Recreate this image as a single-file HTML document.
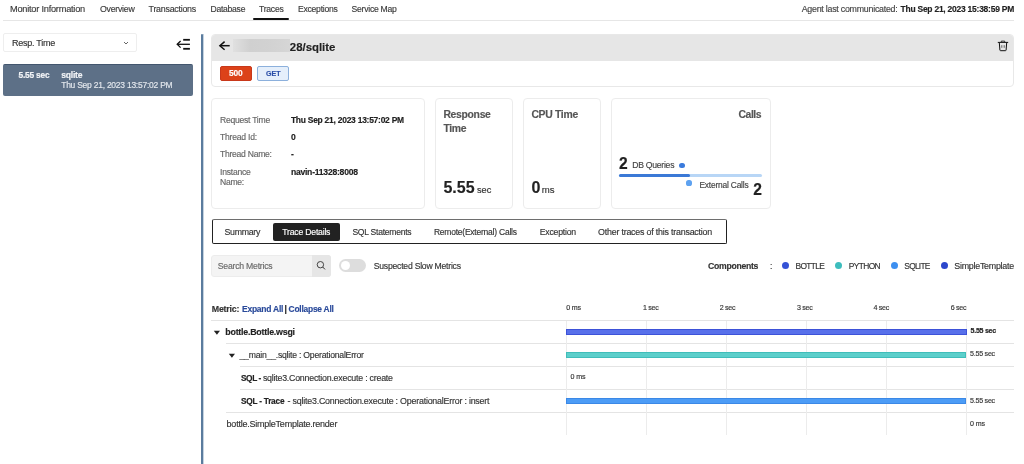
<!DOCTYPE html>
<html><head><meta charset="utf-8"><title>Traces</title>
<style>
html,body{margin:0;padding:0;background:#fff;}
body{width:1024px;height:464px;position:relative;overflow:hidden;font-family:"Liberation Sans",sans-serif;}
.t{position:absolute;white-space:pre;line-height:1;-webkit-text-stroke:0.15px currentColor;}
#wrap{position:absolute;left:0;top:0;width:1024px;height:464px;filter:blur(0.3px);}
.r{position:absolute;}
svg.r{overflow:visible;}
</style></head><body><div id="wrap">
<div class="t" style="left:10.00px;top:5px;font-size:9.23px;font-weight:400;color:#3a3a3a;letter-spacing:-0.234px;">Monitor Information</div>
<div class="t" style="left:100.00px;top:5px;font-size:8.78px;font-weight:400;color:#3a3a3a;letter-spacing:-0.260px;">Overview</div>
<div class="t" style="left:148.60px;top:5px;font-size:8.83px;font-weight:400;color:#3a3a3a;letter-spacing:-0.237px;">Transactions</div>
<div class="t" style="left:210.50px;top:5px;font-size:8.59px;font-weight:400;color:#3a3a3a;letter-spacing:-0.260px;">Database</div>
<div class="t" style="left:259.00px;top:5px;font-size:8.61px;font-weight:400;color:#3a3a3a;letter-spacing:-0.245px;">Traces</div>
<div class="t" style="left:298.00px;top:5px;font-size:8.59px;font-weight:400;color:#3a3a3a;letter-spacing:-0.237px;">Exceptions</div>
<div class="t" style="left:351.60px;top:5px;font-size:8.6px;font-weight:400;color:#3a3a3a;letter-spacing:-0.253px;">Service Map</div>
<div class="t" style="left:801.70px;top:5px;font-size:8.84px;font-weight:400;color:#444;letter-spacing:-0.240px;">Agent last communicated:</div>
<div class="t" style="right:10.04px;top:5px;font-size:8.48px;font-weight:700;color:#222;letter-spacing:-0.237px;">Thu Sep 21, 2023 15:38:59 PM</div>
<div class="r" style="left:3px;top:20px;width:1011px;height:1px;background:#e6e6e6"></div>
<div class="r" style="left:253px;top:18px;width:36px;height:2px;background:#111;border-radius:1px"></div>
<div class="r" style="left:3px;top:33px;width:134px;height:19px;border:1px solid #eeeeee;border-radius:2px;box-sizing:border-box;background:#fff"></div>
<div class="t" style="left:12.00px;top:39px;font-size:9.0px;font-weight:400;color:#333;letter-spacing:-0.259px;">Resp. Time</div>
<svg class="r" style="left:123px;top:41px" width="6" height="4" viewBox="0 0 6 4"><path d="M1 1 L3 3 L5 1" fill="none" stroke="#555" stroke-width="0.9"/></svg>
<svg class="r" style="left:175px;top:37px" width="17" height="14" viewBox="0 0 17 14"><path d="M8.2 2.8 H14.9" stroke="#111" stroke-width="1.8"/><path d="M2.2 7.3 H14.9" stroke="#111" stroke-width="1.3"/><path d="M5.6 4 L2.2 7.3 L5.6 10.6" fill="none" stroke="#111" stroke-width="1.3"/><path d="M8.2 11.8 H14.9" stroke="#111" stroke-width="1.8"/></svg>
<div class="r" style="left:3px;top:64px;width:190px;height:32px;background:#5d7087;border-top:1px solid #43566e;box-sizing:border-box;border-radius:2px"></div>
<div class="t" style="left:18.60px;top:71px;font-size:8.37px;font-weight:700;color:#f2f4f7;letter-spacing:-0.229px;">5.55 sec</div>
<div class="t" style="left:61.20px;top:71px;font-size:8.59px;font-weight:700;color:#f2f4f7;letter-spacing:-0.211px;">sqlite</div>
<div class="t" style="left:61.20px;top:81px;font-size:8.48px;font-weight:400;color:#e4e8ee;letter-spacing:-0.233px;">Thu Sep 21, 2023 13:57:02 PM</div>
<div class="r" style="left:201px;top:34px;width:2px;height:430px;background:#5b7c9e;border-radius:1px 1px 0 0"></div>
<div class="r" style="left:203px;top:34px;width:0.5px;height:430px;background:#c5d3e0"></div>
<div class="r" style="left:211px;top:34px;width:803px;height:53px;border:1px solid #e8e8e8;border-radius:4px;box-sizing:border-box;background:#fff;overflow:hidden"></div>
<div class="r" style="left:212px;top:35px;width:801px;height:26px;background:#e6e6e6;border-radius:3px 3px 0 0"></div>
<svg class="r" style="left:217px;top:39px" width="16" height="13" viewBox="0 0 16 13"><path d="M2.9 6.7 H12.7" stroke="#111" stroke-width="1.5"/><path d="M7.6 2.6 L2.9 6.7 L7.6 10.8" fill="none" stroke="#111" stroke-width="1.5"/></svg>
<div class="r" style="left:233px;top:39px;width:57px;height:13px;background:linear-gradient(90deg,#e0e0e0,#d0d0d0 30%,#d2d2d2 70%,#d6d6d6);filter:blur(0.6px)"></div>
<div class="t" style="left:289.80px;top:42px;font-size:11.4px;font-weight:700;color:#222;">28/sqlite</div>
<svg class="r" style="left:996px;top:39px" width="14" height="14" viewBox="0 0 14 14"><path d="M1.8 3.4 H12.2" stroke="#111" stroke-width="1.0"/><path d="M5.3 3.2 V2.1 H8.7 V3.2" fill="none" stroke="#222" stroke-width="0.9"/><path d="M3.3 3.6 L3.9 11.1 Q4 11.7 4.6 11.7 H9.4 Q10 11.7 10.1 11.1 L10.7 3.6" fill="none" stroke="#111" stroke-width="1.0"/><path d="M5.8 6.2 V8.8" stroke="#444" stroke-width="0.8"/><path d="M8.2 6.2 V8.8" stroke="#444" stroke-width="0.8"/></svg>
<div class="r" style="left:220px;top:66px;width:32px;height:15px;background:#dc4219;border-radius:2px;border:1px solid #c8381a;box-sizing:border-box"></div>
<div class="t" style="left:229.00px;top:69px;font-size:8.4px;font-weight:700;color:#fff;letter-spacing:-0.167px;">500</div>
<div class="r" style="left:257px;top:66px;width:32px;height:15px;background:#e5effb;border-radius:2px;border:1px solid #8cb0dc;box-sizing:border-box"></div>
<div class="t" style="left:266.00px;top:70px;font-size:8.0px;font-weight:700;color:#2b4fa8;transform:scaleX(0.885);transform-origin:0 0">GET</div>
<div class="r" style="left:211.3px;top:98.3px;width:213.39999999999998px;height:110.39999999999999px;border:1px solid #ececec;border-radius:4px;box-sizing:border-box;background:#fff"></div>
<div class="t" style="left:220.00px;top:116px;font-size:8.59px;font-weight:400;color:#666;letter-spacing:-0.249px;">Request Time</div>
<div class="t" style="left:220.00px;top:133px;font-size:8.59px;font-weight:400;color:#666;letter-spacing:-0.220px;">Thread Id:</div>
<div class="t" style="left:220.00px;top:150px;font-size:8.59px;font-weight:400;color:#666;letter-spacing:-0.258px;">Thread Name:</div>
<div class="t" style="left:220.00px;top:168px;font-size:8.59px;font-weight:400;color:#666;letter-spacing:-0.229px;">Instance</div>
<div class="t" style="left:220.00px;top:178px;font-size:8.59px;font-weight:400;color:#666;letter-spacing:-0.284px;">Name:</div>
<div class="t" style="left:290.90px;top:116px;font-size:8.46px;font-weight:700;color:#222;letter-spacing:-0.245px;">Thu Sep 21, 2023 13:57:02 PM</div>
<div class="t" style="left:290.90px;top:133px;font-size:8.59px;font-weight:700;color:#222;letter-spacing:-0.266px;">0</div>
<div class="t" style="left:290.90px;top:150px;font-size:8.59px;font-weight:700;color:#222;letter-spacing:-0.156px;">-</div>
<div class="t" style="left:290.90px;top:168px;font-size:8.63px;font-weight:700;color:#222;letter-spacing:-0.257px;">navin-11328:8008</div>
<div class="r" style="left:435px;top:98px;width:77.70000000000005px;height:110.69999999999999px;border:1px solid #ececec;border-radius:4px;box-sizing:border-box;background:#fff"></div>
<div class="t" style="left:443.40px;top:110px;font-size:10.4px;font-weight:700;color:#555;letter-spacing:-0.309px;">Response</div>
<div class="t" style="left:443.40px;top:124px;font-size:10.4px;font-weight:700;color:#555;letter-spacing:-0.301px;">Time</div>
<div class="t" style="left:443.40px;top:180px;font-size:16.0px;font-weight:700;color:#222;">5.55</div>
<div class="t" style="left:477.00px;top:186px;font-size:9.2px;font-weight:400;color:#333;">sec</div>
<div class="r" style="left:522.7px;top:98px;width:78.0px;height:110.69999999999999px;border:1px solid #ececec;border-radius:4px;box-sizing:border-box;background:#fff"></div>
<div class="t" style="left:531.40px;top:110px;font-size:10.4px;font-weight:700;color:#555;letter-spacing:-0.303px;">CPU Time</div>
<div class="t" style="left:531.40px;top:180px;font-size:16.0px;font-weight:700;color:#222;">0</div>
<div class="t" style="left:541.70px;top:185px;font-size:9.6px;font-weight:400;color:#333;">ms</div>
<div class="r" style="left:610.5px;top:98px;width:160.0px;height:110.69999999999999px;border:1px solid #ececec;border-radius:4px;box-sizing:border-box;background:#fff"></div>
<div class="t" style="right:262.97px;top:110px;font-size:10.4px;font-weight:700;color:#555;letter-spacing:-0.472px;">Calls</div>
<div class="t" style="left:619.00px;top:156px;font-size:15.6px;font-weight:700;color:#222;">2</div>
<div class="t" style="left:632.20px;top:161px;font-size:8.64px;font-weight:400;color:#444;letter-spacing:-0.258px;">DB Queries</div>
<div class="r" style="left:679.4px;top:163.1px;width:5.2px;height:5.2px;border-radius:50%;background:#3b7bdc"></div>
<div class="r" style="left:619px;top:174px;width:143px;height:3px;background:#b8d6f6;border-radius:1.5px"></div>
<div class="r" style="left:619px;top:174px;width:71px;height:3px;background:#3b79d6;border-radius:1.5px"></div>
<div class="r" style="left:686.4px;top:180.4px;width:5.2px;height:5.2px;border-radius:50%;background:#5ea2f0"></div>
<div class="t" style="left:699.40px;top:181px;font-size:8.44px;font-weight:400;color:#444;letter-spacing:-0.208px;">External Calls</div>
<div class="t" style="right:262.20px;top:182px;font-size:15.6px;font-weight:700;color:#222;">2</div>
<div class="r" style="left:211.5px;top:219px;width:515.0px;height:25px;border:1.3px solid #222;border-top-color:#6e6e6e;border-radius:2px;box-sizing:border-box;background:#fff"></div>
<div class="r" style="left:273px;top:222.5px;width:67px;height:18.5px;background:#222;border-radius:2px"></div>
<div class="t" style="left:224.50px;top:228px;font-size:8.8px;font-weight:400;color:#333;letter-spacing:-0.306px;">Summary</div>
<div class="t" style="left:282.30px;top:228px;font-size:8.69px;font-weight:400;color:#fff;letter-spacing:-0.218px;">Trace Details</div>
<div class="t" style="left:352.40px;top:228px;font-size:8.56px;font-weight:400;color:#333;letter-spacing:-0.244px;">SQL Statements</div>
<div class="t" style="left:433.90px;top:228px;font-size:8.51px;font-weight:400;color:#333;letter-spacing:-0.228px;">Remote(External) Calls</div>
<div class="t" style="left:539.80px;top:228px;font-size:8.71px;font-weight:400;color:#333;letter-spacing:-0.238px;">Exception</div>
<div class="t" style="left:598.00px;top:228px;font-size:8.9px;font-weight:400;color:#333;letter-spacing:-0.213px;">Other traces of this transaction</div>
<div class="r" style="left:211px;top:255px;width:120px;height:21.5px;background:#f4f4f4;border:1px solid #ececec;border-radius:3px;box-sizing:border-box"></div>
<div class="r" style="left:312px;top:255px;width:19px;height:21.5px;background:#e6e6e6;border-radius:0 3px 3px 0"></div>
<div class="t" style="left:217.80px;top:262px;font-size:8.69px;font-weight:400;color:#6a6a6a;letter-spacing:-0.230px;">Search Metrics</div>
<svg class="r" style="left:314px;top:258px" width="14" height="14" viewBox="0 0 14 14"><circle cx="6.4" cy="6.7" r="3.2" fill="none" stroke="#333" stroke-width="0.9"/><path d="M8.7 9 L11 11.4" stroke="#333" stroke-width="1"/></svg>
<div class="r" style="left:339px;top:259.2px;width:27px;height:12.800000000000011px;background:#dddddd;border-radius:7px"></div>
<div class="r" style="left:341.2px;top:260.8px;width:9px;height:9px;border-radius:50%;background:#fff"></div>
<div class="t" style="left:373.75px;top:262px;font-size:8.65px;font-weight:400;color:#333;letter-spacing:-0.227px;">Suspected Slow Metrics</div>
<div class="t" style="left:708.10px;top:262px;font-size:8.67px;font-weight:700;color:#333;letter-spacing:-0.297px;">Components</div>
<div class="t" style="left:770.00px;top:262px;font-size:8.59px;font-weight:400;color:#333;letter-spacing:-0.141px;">:</div>
<div class="r" style="left:782.00px;top:262.00px;width:7.00px;height:7.00px;border-radius:50%;background:#3552d6"></div>
<div class="t" style="left:795.60px;top:262px;font-size:8.4px;font-weight:400;color:#333;letter-spacing:-0.667px;">BOTTLE</div>
<div class="r" style="left:835.00px;top:262.00px;width:7.00px;height:7.00px;border-radius:50%;background:#3dbdbd"></div>
<div class="t" style="left:848.80px;top:262px;font-size:8.4px;font-weight:400;color:#333;letter-spacing:-0.620px;">PYTHON</div>
<div class="r" style="left:891.00px;top:262.00px;width:7.00px;height:7.00px;border-radius:50%;background:#3d8ff0"></div>
<div class="t" style="left:904.30px;top:262px;font-size:8.4px;font-weight:400;color:#333;letter-spacing:-0.750px;">SQLITE</div>
<div class="r" style="left:940.50px;top:262.00px;width:7.00px;height:7.00px;border-radius:50%;background:#2c47cc"></div>
<div class="t" style="left:954.30px;top:262px;font-size:8.89px;font-weight:400;color:#333;letter-spacing:-0.253px;">SimpleTemplate</div>
<div class="t" style="left:211.80px;top:305px;font-size:8.83px;font-weight:700;color:#333;letter-spacing:-0.234px;">Metric:</div>
<div class="t" style="left:242.00px;top:305px;font-size:8.51px;font-weight:700;color:#2a4a9a;letter-spacing:-0.248px;">Expand All</div>
<div class="t" style="left:284.40px;top:305px;font-size:8.48px;font-weight:700;color:#222;letter-spacing:-0.125px;">|</div>
<div class="t" style="left:288.60px;top:305px;font-size:8.41px;font-weight:700;color:#2a4a9a;letter-spacing:-0.229px;">Collapse All</div>
<div class="t" style="left:566.20px;top:305px;font-size:7.1px;font-weight:400;color:#333;letter-spacing:-0.145px;">0 ms</div>
<div class="t" style="left:643.00px;top:305px;font-size:7.1px;font-weight:400;color:#333;letter-spacing:-0.284px;">1 sec</div>
<div class="t" style="left:719.70px;top:305px;font-size:7.1px;font-weight:400;color:#333;letter-spacing:-0.284px;">2 sec</div>
<div class="t" style="left:796.90px;top:305px;font-size:7.1px;font-weight:400;color:#333;letter-spacing:-0.284px;">3 sec</div>
<div class="t" style="left:873.50px;top:305px;font-size:7.1px;font-weight:400;color:#333;letter-spacing:-0.284px;">4 sec</div>
<div class="t" style="left:950.70px;top:305px;font-size:7.1px;font-weight:400;color:#333;letter-spacing:-0.284px;">6 sec</div>
<div class="r" style="left:211px;top:320px;width:803px;height:1px;background:#e4e4e4"></div>
<div class="r" style="left:226px;top:343px;width:788px;height:1px;background:#e4e4e4"></div>
<div class="r" style="left:240px;top:366px;width:774px;height:1px;background:#e4e4e4"></div>
<div class="r" style="left:240px;top:389px;width:774px;height:1px;background:#e4e4e4"></div>
<div class="r" style="left:226px;top:412px;width:788px;height:1px;background:#e4e4e4"></div>
<div class="r" style="left:566px;top:321px;width:1px;height:114px;background:#ececec"></div>
<div class="r" style="left:646px;top:321px;width:1px;height:114px;background:#ececec"></div>
<div class="r" style="left:726px;top:321px;width:1px;height:114px;background:#ececec"></div>
<div class="r" style="left:806px;top:321px;width:1px;height:114px;background:#ececec"></div>
<div class="r" style="left:886px;top:321px;width:1px;height:114px;background:#ececec"></div>
<div class="r" style="left:966px;top:321px;width:1px;height:114px;background:#ececec"></div>
<svg class="r" style="left:213px;top:329.6px" width="8" height="6" viewBox="0 0 8 6"><path d="M0.8 0.8 H7 L3.9 4.8 Z" fill="#222"/></svg>
<svg class="r" style="left:228px;top:352.6px" width="8" height="6" viewBox="0 0 8 6"><path d="M0.8 0.8 H7 L3.9 4.8 Z" fill="#222"/></svg>
<div class="t" style="left:225.30px;top:328px;font-size:8.86px;font-weight:700;color:#222;letter-spacing:-0.232px;">bottle.Bottle.wsgi</div>
<div class="t" style="left:239.50px;top:351px;font-size:8.66px;font-weight:400;color:#333;letter-spacing:-0.224px;">__main__.sqlite : OperationalError</div>
<div class="t" style="left:240.90px;top:374px;font-size:8.3px;font-weight:700;color:#222;letter-spacing:-0.372px;">SQL -</div>
<div class="t" style="left:262.90px;top:374px;font-size:8.82px;font-weight:400;color:#333;letter-spacing:-0.223px;">sqlite3.Connection.execute : create</div>
<div class="t" style="left:240.90px;top:397px;font-size:8.3px;font-weight:700;color:#222;letter-spacing:-0.236px;">SQL - Trace</div>
<div class="t" style="left:287.60px;top:397px;font-size:8.87px;font-weight:400;color:#333;letter-spacing:-0.215px;">- sqlite3.Connection.execute : OperationalError : insert</div>
<div class="t" style="left:226.60px;top:420px;font-size:9.01px;font-weight:400;color:#333;letter-spacing:-0.232px;">bottle.SimpleTemplate.render</div>
<div class="r" style="left:566px;top:328.5px;width:401px;height:6.5px;background:#5870ea;border:1px solid #3d52d8;box-sizing:border-box"></div>
<div class="r" style="left:566px;top:351.5px;width:400px;height:6.5px;background:#5ccfcb;border:1px solid #40bdb9;box-sizing:border-box"></div>
<div class="r" style="left:566px;top:397.5px;width:400px;height:6.5px;background:#4c9cf6;border:1px solid #3b88e6;box-sizing:border-box"></div>
<div class="t" style="left:970.60px;top:328px;font-size:7.1px;font-weight:700;color:#222;letter-spacing:-0.289px;">5.55 sec</div>
<div class="t" style="left:970.00px;top:351px;font-size:7.1px;font-weight:400;color:#333;letter-spacing:-0.236px;">5.55 sec</div>
<div class="t" style="left:570.50px;top:374px;font-size:7.1px;font-weight:400;color:#333;letter-spacing:-0.145px;">0 ms</div>
<div class="t" style="left:970.00px;top:398px;font-size:7.1px;font-weight:400;color:#333;letter-spacing:-0.236px;">5.55 sec</div>
<div class="t" style="left:970.00px;top:421px;font-size:7.1px;font-weight:400;color:#333;letter-spacing:-0.145px;">0 ms</div>
</div></body></html>
